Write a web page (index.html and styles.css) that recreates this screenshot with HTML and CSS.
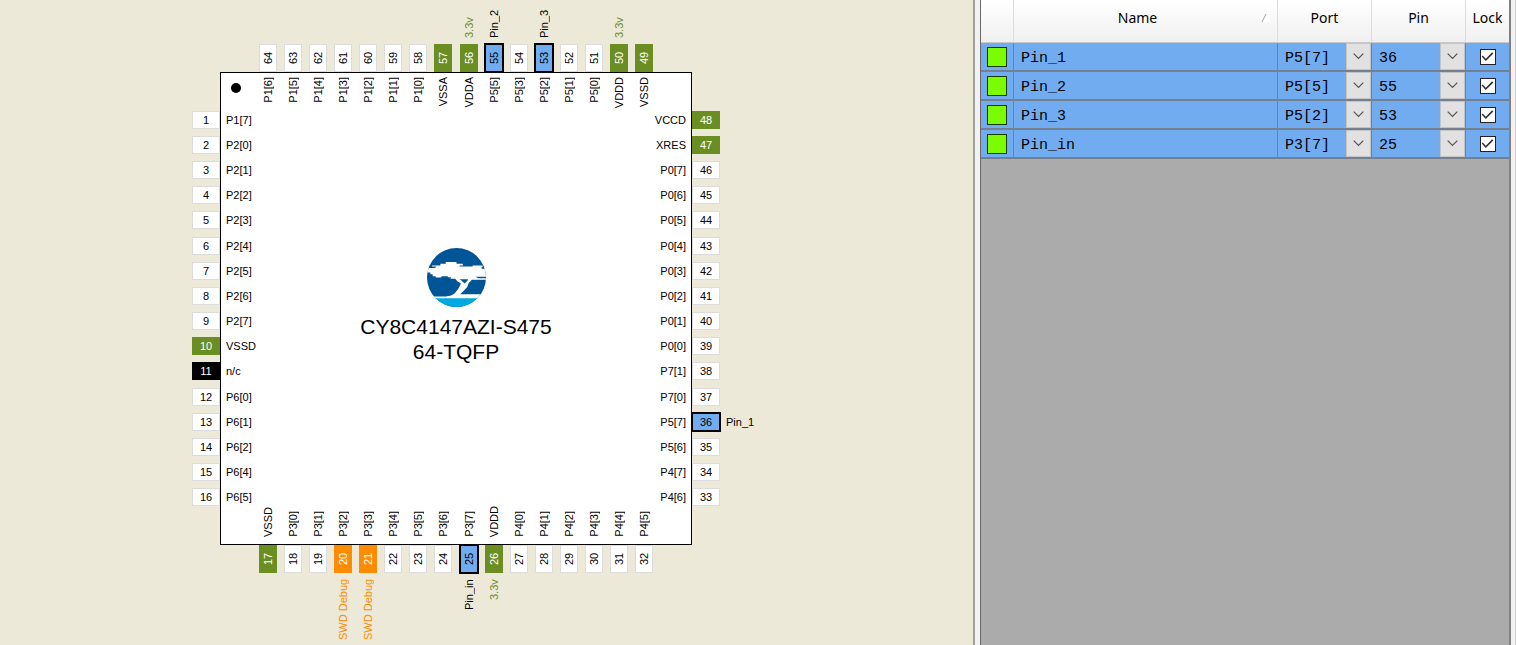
FILE: index.html
```html
<!DOCTYPE html>
<html lang="en">
<head>
<meta charset="utf-8">
<title>Pin Editor</title>
<link rel="stylesheet" href="styles.css">
</head>
<body>
<div class="editor">
  <main class="diagram">
    <div class="chip">
      <section class="body">
        <span class="dot"></span>
        <svg class="logo" viewBox="0 0 176 176" aria-hidden="true">
          <defs><clipPath id="disc"><circle cx="88" cy="88" r="88"/></clipPath></defs>
          <g clip-path="url(#disc)">
            <rect width="176" height="176" fill="#005596"/>
            <rect y="148" width="176" height="28" fill="#00a9e0"/>
            <path fill="#fff" d="M0 67L4 60H24L28 55H15V52H40V47H56V42H88V47H107V52H96L98 55H136V52H166V57H163V62H176V86H145L153 90H176V95H134L124 105L120 116L109 128L99 138H176V150H0V145H56L72 142L82 136L92 124L99 111L101 105L92 101L84 92H70L72 87H62V84H44L42 88H26V84H17V78H10V73H0Z"/>
            <path fill="#005596" d="M97 93H122V96L112 106L102 96Z"/>
          </g>
        </svg>
        <h1 class="part">CY8C4147AZI-S475<br>64-TQFP</h1>
      </section>

      <ol class="pins top">
        <li class="pin"><span class="net"></span><b class="pad">64</b><span class="port">P1[6]</span></li>
        <li class="pin"><span class="net"></span><b class="pad">63</b><span class="port">P1[5]</span></li>
        <li class="pin"><span class="net"></span><b class="pad">62</b><span class="port">P1[4]</span></li>
        <li class="pin"><span class="net"></span><b class="pad">61</b><span class="port">P1[3]</span></li>
        <li class="pin"><span class="net"></span><b class="pad">60</b><span class="port">P1[2]</span></li>
        <li class="pin"><span class="net"></span><b class="pad">59</b><span class="port">P1[1]</span></li>
        <li class="pin"><span class="net"></span><b class="pad">58</b><span class="port">P1[0]</span></li>
        <li class="pin power"><span class="net"></span><b class="pad">57</b><span class="port">VSSA</span></li>
        <li class="pin power"><span class="net">3.3v</span><b class="pad">56</b><span class="port">VDDA</span></li>
        <li class="pin used"><span class="net">Pin_2</span><b class="pad">55</b><span class="port">P5[5]</span></li>
        <li class="pin"><span class="net"></span><b class="pad">54</b><span class="port">P5[3]</span></li>
        <li class="pin used"><span class="net">Pin_3</span><b class="pad">53</b><span class="port">P5[2]</span></li>
        <li class="pin"><span class="net"></span><b class="pad">52</b><span class="port">P5[1]</span></li>
        <li class="pin"><span class="net"></span><b class="pad">51</b><span class="port">P5[0]</span></li>
        <li class="pin power"><span class="net">3.3v</span><b class="pad">50</b><span class="port">VDDD</span></li>
        <li class="pin power"><span class="net"></span><b class="pad">49</b><span class="port">VSSD</span></li>
      </ol>

      <ol class="pins left">
        <li class="pin"><b class="pad">1</b><span class="port">P1[7]</span></li>
        <li class="pin"><b class="pad">2</b><span class="port">P2[0]</span></li>
        <li class="pin"><b class="pad">3</b><span class="port">P2[1]</span></li>
        <li class="pin"><b class="pad">4</b><span class="port">P2[2]</span></li>
        <li class="pin"><b class="pad">5</b><span class="port">P2[3]</span></li>
        <li class="pin"><b class="pad">6</b><span class="port">P2[4]</span></li>
        <li class="pin"><b class="pad">7</b><span class="port">P2[5]</span></li>
        <li class="pin"><b class="pad">8</b><span class="port">P2[6]</span></li>
        <li class="pin"><b class="pad">9</b><span class="port">P2[7]</span></li>
        <li class="pin power"><b class="pad">10</b><span class="port">VSSD</span></li>
        <li class="pin unconnected"><b class="pad">11</b><span class="port">n/c</span></li>
        <li class="pin"><b class="pad">12</b><span class="port">P6[0]</span></li>
        <li class="pin"><b class="pad">13</b><span class="port">P6[1]</span></li>
        <li class="pin"><b class="pad">14</b><span class="port">P6[2]</span></li>
        <li class="pin"><b class="pad">15</b><span class="port">P6[4]</span></li>
        <li class="pin"><b class="pad">16</b><span class="port">P6[5]</span></li>
      </ol>

      <ol class="pins right">
        <li class="pin power"><span class="port">VCCD</span><b class="pad">48</b><span class="net"></span></li>
        <li class="pin power"><span class="port">XRES</span><b class="pad">47</b><span class="net"></span></li>
        <li class="pin"><span class="port">P0[7]</span><b class="pad">46</b><span class="net"></span></li>
        <li class="pin"><span class="port">P0[6]</span><b class="pad">45</b><span class="net"></span></li>
        <li class="pin"><span class="port">P0[5]</span><b class="pad">44</b><span class="net"></span></li>
        <li class="pin"><span class="port">P0[4]</span><b class="pad">43</b><span class="net"></span></li>
        <li class="pin"><span class="port">P0[3]</span><b class="pad">42</b><span class="net"></span></li>
        <li class="pin"><span class="port">P0[2]</span><b class="pad">41</b><span class="net"></span></li>
        <li class="pin"><span class="port">P0[1]</span><b class="pad">40</b><span class="net"></span></li>
        <li class="pin"><span class="port">P0[0]</span><b class="pad">39</b><span class="net"></span></li>
        <li class="pin"><span class="port">P7[1]</span><b class="pad">38</b><span class="net"></span></li>
        <li class="pin"><span class="port">P7[0]</span><b class="pad">37</b><span class="net"></span></li>
        <li class="pin used"><span class="port">P5[7]</span><b class="pad">36</b><span class="net">Pin_1</span></li>
        <li class="pin"><span class="port">P5[6]</span><b class="pad">35</b><span class="net"></span></li>
        <li class="pin"><span class="port">P4[7]</span><b class="pad">34</b><span class="net"></span></li>
        <li class="pin"><span class="port">P4[6]</span><b class="pad">33</b><span class="net"></span></li>
      </ol>

      <ol class="pins bottom">
        <li class="pin power"><span class="port">VSSD</span><b class="pad">17</b><span class="net"></span></li>
        <li class="pin"><span class="port">P3[0]</span><b class="pad">18</b><span class="net"></span></li>
        <li class="pin"><span class="port">P3[1]</span><b class="pad">19</b><span class="net"></span></li>
        <li class="pin debug"><span class="port">P3[2]</span><b class="pad">20</b><span class="net">SWD Debug</span></li>
        <li class="pin debug"><span class="port">P3[3]</span><b class="pad">21</b><span class="net">SWD Debug</span></li>
        <li class="pin"><span class="port">P3[4]</span><b class="pad">22</b><span class="net"></span></li>
        <li class="pin"><span class="port">P3[5]</span><b class="pad">23</b><span class="net"></span></li>
        <li class="pin"><span class="port">P3[6]</span><b class="pad">24</b><span class="net"></span></li>
        <li class="pin used"><span class="port">P3[7]</span><b class="pad">25</b><span class="net">Pin_in</span></li>
        <li class="pin power"><span class="port">VDDD</span><b class="pad">26</b><span class="net">3.3v</span></li>
        <li class="pin"><span class="port">P4[0]</span><b class="pad">27</b><span class="net"></span></li>
        <li class="pin"><span class="port">P4[1]</span><b class="pad">28</b><span class="net"></span></li>
        <li class="pin"><span class="port">P4[2]</span><b class="pad">29</b><span class="net"></span></li>
        <li class="pin"><span class="port">P4[3]</span><b class="pad">30</b><span class="net"></span></li>
        <li class="pin"><span class="port">P4[4]</span><b class="pad">31</b><span class="net"></span></li>
        <li class="pin"><span class="port">P4[5]</span><b class="pad">32</b><span class="net"></span></li>
      </ol>
    </div>
  </main>

  <aside class="panel">
    <div class="grid">
      <table class="signals">
        <colgroup><col class="c-state"><col><col class="c-choice"><col class="c-choice"><col class="c-lock"></colgroup>
        <thead>
          <tr>
            <td></td>
            <th scope="col"><div class="heading"><span class="title">Name</span><svg class="sort" viewBox="0 0 10 10" aria-hidden="true"><path d="M1 9H9L5 1" fill="#fff"/><path d="M1 9L5 1" stroke="#a0a0a0" fill="none"/></svg></div></th>
            <th scope="col">Port</th>
            <th scope="col">Pin</th>
            <th scope="col">Lock</th>
          </tr>
        </thead>
        <tbody>
          <tr>
            <td><span class="state"></span></td><td class="name">Pin_1</td>
            <td><div class="choice"><select aria-label="Port of Pin_1"><option>P5[7]</option></select><svg class="arrow" viewBox="0 0 24 26" aria-hidden="true"><path d="M7 10L12 15L17 10"/></svg></div></td>
            <td><div class="choice"><select aria-label="Pin of Pin_1"><option>36</option></select><svg class="arrow" viewBox="0 0 24 26" aria-hidden="true"><path d="M7 10L12 15L17 10"/></svg></div></td>
            <td><input class="lock" type="checkbox" aria-label="Lock Pin_1" checked></td>
          </tr>
          <tr>
            <td><span class="state"></span></td><td class="name">Pin_2</td>
            <td><div class="choice"><select aria-label="Port of Pin_2"><option>P5[5]</option></select><svg class="arrow" viewBox="0 0 24 26" aria-hidden="true"><path d="M7 10L12 15L17 10"/></svg></div></td>
            <td><div class="choice"><select aria-label="Pin of Pin_2"><option>55</option></select><svg class="arrow" viewBox="0 0 24 26" aria-hidden="true"><path d="M7 10L12 15L17 10"/></svg></div></td>
            <td><input class="lock" type="checkbox" aria-label="Lock Pin_2" checked></td>
          </tr>
          <tr>
            <td><span class="state"></span></td><td class="name">Pin_3</td>
            <td><div class="choice"><select aria-label="Port of Pin_3"><option>P5[2]</option></select><svg class="arrow" viewBox="0 0 24 26" aria-hidden="true"><path d="M7 10L12 15L17 10"/></svg></div></td>
            <td><div class="choice"><select aria-label="Pin of Pin_3"><option>53</option></select><svg class="arrow" viewBox="0 0 24 26" aria-hidden="true"><path d="M7 10L12 15L17 10"/></svg></div></td>
            <td><input class="lock" type="checkbox" aria-label="Lock Pin_3" checked></td>
          </tr>
          <tr>
            <td><span class="state"></span></td><td class="name">Pin_in</td>
            <td><div class="choice"><select aria-label="Port of Pin_in"><option>P3[7]</option></select><svg class="arrow" viewBox="0 0 24 26" aria-hidden="true"><path d="M7 10L12 15L17 10"/></svg></div></td>
            <td><div class="choice"><select aria-label="Pin of Pin_in"><option>25</option></select><svg class="arrow" viewBox="0 0 24 26" aria-hidden="true"><path d="M7 10L12 15L17 10"/></svg></div></td>
            <td><input class="lock" type="checkbox" aria-label="Lock Pin_in" checked></td>
          </tr>
        </tbody>
      </table>
    </div>
  </aside>
</div>
</body>
</html>
```
FILE: styles.css
```css
* { box-sizing: border-box; }

body {
  margin: 0;
  font-family: "Liberation Sans", Arial, sans-serif;
  color: #000;
}

.editor {
  display: flex;
  height: 100vh;
  overflow: hidden;
}

/* Package diagram */
.diagram {
  flex: 1;
  display: flex;
  justify-content: center;
  align-items: flex-start;
  padding-right: 61px;
  background: #ece9d8;
}

.chip {
  display: grid;
  grid-template-columns: 64px 28px 472px 28px 64px;
  grid-template-rows: 44px 28px 473px 28px 72px;
  font-size: 11px;
  line-height: 14px;
}

.body {
  grid-area: 3 / 3;
  display: flex;
  flex-direction: column;
  align-items: center;
  padding: 10px;
  border: 1px solid #000;
  background: #fff;
}

.dot {
  align-self: flex-start;
  width: 10px;
  height: 10px;
  border-radius: 50%;
  background: #000;
}

.logo {
  width: 59px;
  height: 59px;
  margin-top: 155px;
}

.part {
  margin: 7px 0 0;
  font-size: 21px;
  font-weight: 400;
  line-height: 25px;
  text-align: center;
}

.pins {
  display: grid;
  margin: 0;
  padding: 0;
  list-style: none;
}

.top, .bottom {
  grid-auto-flow: column;
  grid-auto-columns: 1fr;
  padding: 0 35px;
}

.left, .right {
  grid-auto-rows: 1fr;
  padding: 35px 0;
}

.top { grid-area: 1 / 3 / 4 / 4; align-self: start; }
.left { grid-area: 3 / 2 / 4 / 4; justify-self: start; }
.right { grid-area: 3 / 3 / 4 / 6; justify-self: end; }
.bottom { grid-area: 3 / 3 / 6 / 4; align-self: end; }

.pin {
  display: flex;
  align-items: center;
}

.pad {
  display: flex;
  flex: none;
  align-items: center;
  justify-content: center;
  width: 28px;
  height: 18px;
  border: 1px solid #dcdcdc;
  background: #fff;
  font-weight: 400;
}

.left .port, .right .port { padding: 0 6px; }
.right .pin { justify-content: flex-end; }
.right .net { width: 64px; padding-left: 6px; }

.top .pin { flex-direction: column; }
.bottom .pin { flex-direction: column; justify-content: flex-end; }

.top .pad, .bottom .pad {
  width: 18px;
  height: 28px;
}

.top .pad, .bottom .pad, .top .port, .bottom .port, .top .net, .bottom .net {
  writing-mode: vertical-rl;
  transform: rotate(180deg);
}

.top .net { height: 44px; padding-top: 6px; white-space: nowrap; }
.bottom .net { height: 72px; padding-bottom: 6px; text-align: right; white-space: nowrap; }
.top .port { padding-bottom: 5px; }
.bottom .port { padding-top: 8px; }

.power .pad { border-color: #6b8e23; background: #6b8e23; color: #fff; }
.power .net { color: #6b8e23; }
.debug .pad { border-color: #ff8c00; background: #ff8c00; color: #fff; }
.debug .net { color: #ff8c00; }
.unconnected .pad { border-color: #000; background: #000; color: #fff; }
.used .pad {
  border-color: #70acef;
  outline: 2px solid #000;
  outline-offset: -1px;
  background: #70acef;
}

/* Signal table */
.panel {
  flex: none;
  display: flex;
  width: 543px;
  padding: 0 4px 0 5px;
  border-left: 2px solid #a0a0a0;
  border-right: 1px solid #d0d0d0;
  background: #f3f1f1;
}

.grid {
  flex: 1;
  border-left: 1px solid #696969;
  border-right: 2px solid #808080;
  background: #ababab;
}

.signals {
  width: 100%;
  table-layout: fixed;
  border-collapse: separate;
  border-spacing: 0;
}

.c-state { width: 33px; }
.c-choice { width: 94px; }
.c-lock { width: 43px; }

.signals th, .signals td {
  padding: 0;
  text-align: center;
}

.signals thead tr {
  height: 43px;
  background: linear-gradient(#fff, #f0f0f0);
}

.signals thead th, .signals thead td {
  padding-bottom: 6px;
  border-right: 1px solid #dcdcdc;
  border-bottom: 1px solid #c8c8c8;
  font-family: "Noto Sans", "Open Sans", sans-serif;
  font-size: 14px;
  font-weight: 400;
  line-height: 20px;
}

.heading {
  display: flex;
  align-items: center;
  padding-right: 6px;
}

.title { flex: 1; }

.sort {
  width: 10px;
  height: 10px;
}

.signals tbody tr { height: 29px; background: #70acef; }

.signals tbody td {
  height: 29px;
  border-right: 1px solid #74808e;
  border-bottom: 2px solid #74808e;
  font-family: "Liberation Mono", "Courier New", monospace;
  font-size: 15px;
  line-height: 20px;
}

.signals tr > :last-child { border-right: 0; }

.signals tbody .name { padding: 4px 0 0 7px; text-align: left; }

.state {
  display: block;
  width: 20px;
  height: 20px;
  margin: 0 auto;
  border: 1px solid #143c00;
  background: #7cfc00;
}

.choice {
  display: grid;
  grid-template-columns: 1fr 25px;
}

.choice select {
  grid-area: 1 / 1 / 2 / 3;
  height: 27px;
  padding: 4px 0 0 7px;
  border: 0;
  border-radius: 0;
  background: transparent;
  color: inherit;
  font: inherit;
  appearance: none;
}

.arrow {
  grid-area: 1 / 2;
  width: 25px;
  height: 27px;
  border: 1px solid #c4c4c4;
  background: #e1e1e1;
  fill: none;
  stroke: #555;
  stroke-width: 1.3;
  pointer-events: none;
}

.lock {
  display: block;
  width: 16px;
  height: 16px;
  margin: 0 auto;
  border: 1px solid #222;
  background: #fff;
  appearance: none;
}

.lock:checked::before {
  content: "";
  display: block;
  height: 14px;
  background: #333;
  clip-path: polygon(8% 50%, 16% 43%, 38% 66%, 83% 20%, 92% 28%, 38% 82%);
}
```
